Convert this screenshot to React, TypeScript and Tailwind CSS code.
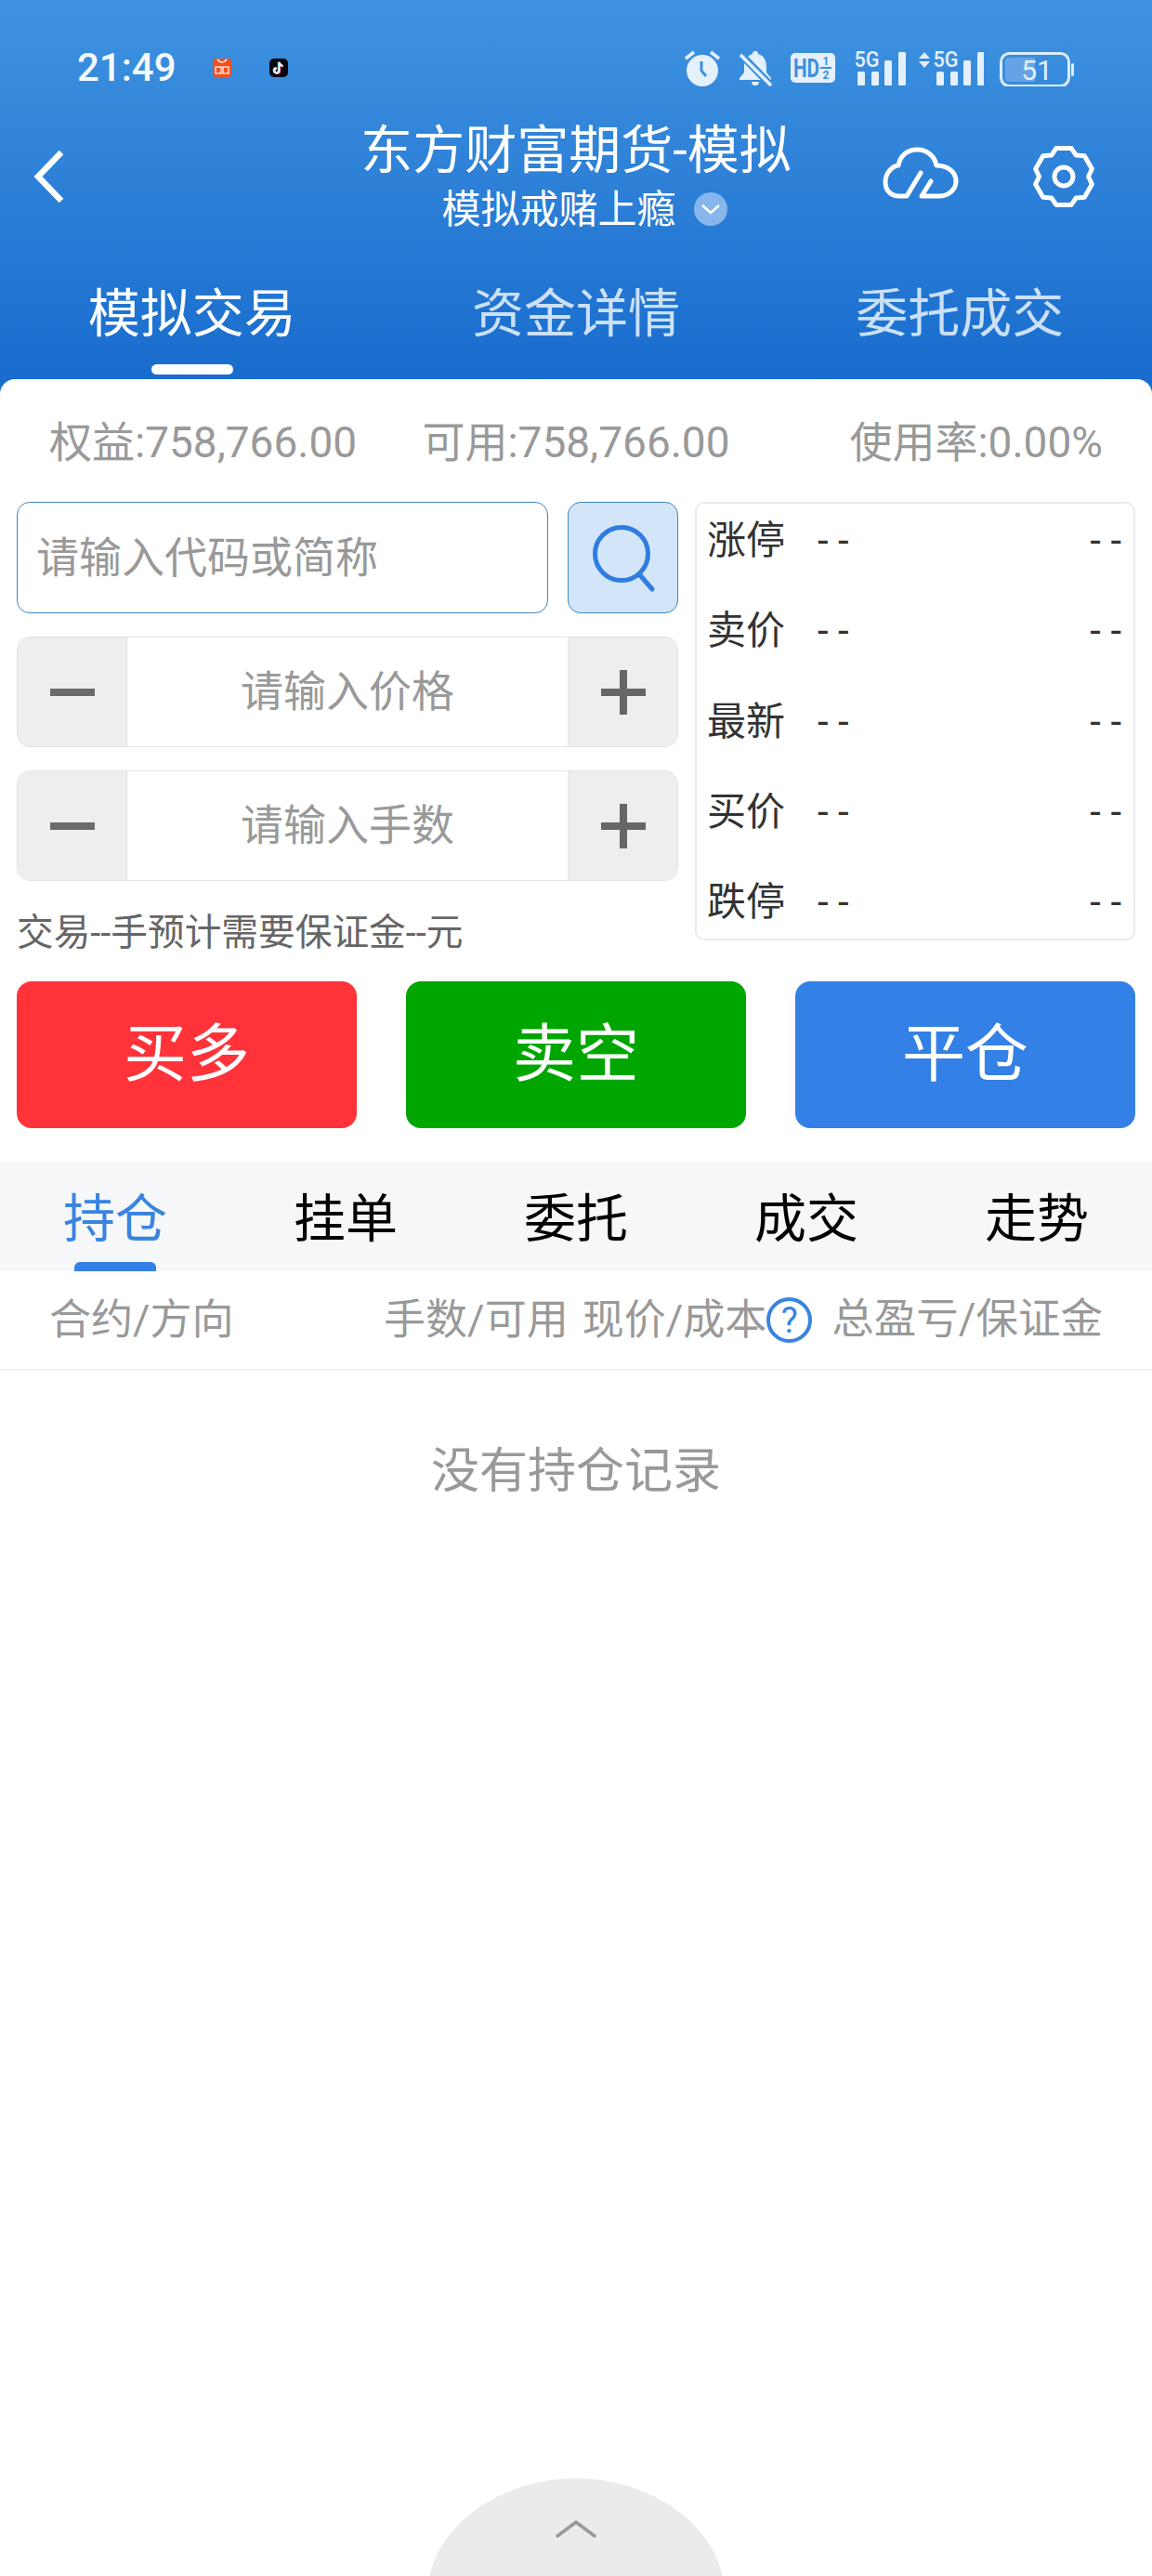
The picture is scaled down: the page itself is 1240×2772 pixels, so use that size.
const topTabs = ["模拟交易", "资金详情", "委托成交"]
const orderTabs = ["持仓", "挂单", "委托", "成交", "走势"]
const quotes = ["涨停", "卖价", "最新", "买价", "跌停"]

const gearPoints = Array.from({ length: 6 }, (_, i) => {
    const a = (Math.PI / 3) * i - Math.PI / 2
    const d = Math.PI / 180
    return [
        [26.5, a - 30 * d],
        [31.5, a - 15 * d],
        [31.5, a + 15 * d],
        [26.5, a + 30 * d],
    ]
})
    .flat()
    .map(([r, a]) => `${(35 + r * Math.cos(a)).toFixed(1)},${(35 + r * Math.sin(a)).toFixed(1)}`)
    .join(" ")

function Signal({ arrows }: { arrows?: boolean }) {
    const x = arrows ? 16 : 0
    return (
        <svg className="-mt-[6px] block" width={arrows ? 70 : 55} height="46" viewBox={arrows ? "0 -6 70 46" : "0 -6 55 46"} fill="#e4f0fb">
            {arrows && <path d="M6 2 L12 9 H0 Z M6 19 L12 12 H0 Z" transform="translate(0 1)" />}
            <text x={x + 13} y="19" textAnchor="middle" fontSize="23" fontWeight="500" textLength="27" lengthAdjust="spacingAndGlyphs">5G</text>
            <rect x={x + 3} y="24" width="8" height="15" rx="1.5" />
            <rect x={x + 18} y="24" width="8" height="15" rx="1.5" />
            <rect x={x + 32} y="12" width="8" height="27" rx="1.5" />
            <rect x={x + 47} y="3" width="8" height="36" rx="1.5" />
        </svg>
    )
}

function StatusBar() {
    return (
        <div className="flex h-[125px] items-start justify-between pl-[83px] pr-[84px] pt-[53px]">
            <div className="flex h-[40px] items-center">
                <span className="w-[105px] text-[42px] font-medium leading-none text-[#f4f9fe]">21:49</span>
                <svg className="ml-[41px]" width="20" height="20" viewBox="0 0 20 20">
                    <rect width="20" height="20" rx="4" fill="#f2501e" />
                    <path d="M5 1 Q10 7 15 1" stroke="#fff" strokeWidth="1.4" fill="none" />
                    <rect x="3" y="9" width="6" height="7" fill="none" stroke="#fff" strokeWidth="1.2" />
                    <rect x="11" y="9" width="6" height="7" fill="none" stroke="#fff" strokeWidth="1.2" />
                </svg>
                <svg className="ml-[41px]" width="20" height="20" viewBox="0 0 20 20">
                    <rect width="20" height="20" rx="5" fill="#07080f" />
                    <path d="M10.5 4 V13 A2.6 2.6 0 1 1 7.8 10.4 M10.5 4 Q11.5 7.5 14.5 8" fill="none" stroke="#35e0e6" strokeWidth="2" transform="translate(-0.7 -0.4)" />
                    <path d="M10.5 4 V13 A2.6 2.6 0 1 1 7.8 10.4 M10.5 4 Q11.5 7.5 14.5 8" fill="none" stroke="#f5325a" strokeWidth="2" transform="translate(0.7 0.4)" />
                    <path d="M10.5 4 V13 A2.6 2.6 0 1 1 7.8 10.4 M10.5 4 Q11.5 7.5 14.5 8" fill="none" stroke="#fff" strokeWidth="1.8" />
                </svg>
            </div>
            <div className="flex h-[40px] items-center">
                <svg width="38" height="40" viewBox="0 0 38 40" fill="#e4f0fb">
                    <circle cx="19" cy="23" r="17" />
                    <path d="M18 13 V23 L23 29" fill="none" stroke="#3d8fde" strokeWidth="3" />
                    <path d="M1 10 L10 3 M37 10 L28 3" stroke="#e4f0fb" strokeWidth="3.5" />
                </svg>
                <svg className="ml-[19px]" width="38" height="40" viewBox="0 0 38 40" fill="#e4f0fb">
                    <path d="M19 2 a3 3 0 0 1 3 3 C29 7 31 13 31 20 V25 L36 31 V33 H2 V31 L7 25 V16 C7 11 11 7 16 5 a3 3 0 0 1 3 -3 Z M15 35 H23 A4 4 0 0 1 15 35 Z" />
                    <path d="M2 4 L35 38" stroke="#3d8fde" strokeWidth="8" />
                    <path d="M3 6 L36 39" stroke="#e4f0fb" strokeWidth="3.5" />
                </svg>
                <svg className="ml-[19px]" width="48" height="34" viewBox="0 0 48 34">
                    <rect y="1" width="48" height="32" rx="5" fill="#e4f0fb" />
                    <text x="3" y="27" fontSize="27" fontWeight="700" fill="#3d8fde" textLength="28" lengthAdjust="spacingAndGlyphs">HD</text>
                    <text x="38" y="14" textAnchor="middle" fontSize="12" fontWeight="700" fill="#3d8fde">1</text>
                    <rect x="32" y="16" width="12" height="2" fill="#3d8fde" />
                    <text x="38" y="29" textAnchor="middle" fontSize="12" fontWeight="700" fill="#3d8fde">2</text>
                </svg>
                <div className="ml-[21px]">
                    <Signal />
                </div>
                <div className="ml-[14px]">
                    <Signal arrows />
                </div>
                <svg className="ml-[17px]" width="80" height="40" viewBox="0 0 80 40">
                    <rect x="1.5" y="4.5" width="73" height="35" rx="9" fill="none" stroke="#dcecfa" strokeWidth="3" />
                    <path d="M10 9 H38 V35 H10 A4 4 0 0 1 6 31 V13 A4 4 0 0 1 10 9 Z" fill="#66a3e6" />
                    <text x="40" y="33" textAnchor="middle" fontSize="30" fill="#e4f0fb">51</text>
                    <rect x="77" y="15" width="3" height="14" rx="1.5" fill="#dcecfa" />
                </svg>
            </div>
        </div>
    )
}

function Header() {
    return (
        <header className="h-[408px] bg-gradient-to-b from-[#3f93e0] to-[#186ccd] text-white">
            <StatusBar />
            <div className="flex h-[130px] items-center">
                <div className="w-[290px] pl-[36px]">
                    <svg className="block" width="34" height="56" viewBox="0 0 34 56" fill="none" stroke="#fff" strokeWidth="6.5">
                        <path d="M30 2 L5 28 L30 54" />
                    </svg>
                </div>
                <div className="flex-1 self-start pt-[2px] text-center">
                    <div className="text-[56px] leading-[70px]">东方财富期货-模拟</div>
                    <div className="flex h-[56px] items-center justify-center pl-[18px] text-[42px]">
                        <span>模拟戒赌上瘾</span>
                        <span className="ml-[19px] flex h-[36px] w-[36px] items-center justify-center rounded-full bg-[#87b6ec]">
                            <svg width="22" height="12" viewBox="0 0 22 12" fill="none" stroke="#fff" strokeWidth="2.6">
                                <path d="M2 2 L11 10 L20 2" />
                            </svg>
                        </span>
                    </div>
                </div>
                <div className="flex w-[290px] items-center justify-end gap-[78px] pr-[60px]">
                    <svg className="-mt-[8px]" width="82" height="56" viewBox="0 0 82 56" fill="none" stroke="#fff" strokeWidth="5" strokeLinecap="round" strokeLinejoin="round">
                        <path d="M41 28 L26 53 H18 C8 53 3 46 3 38 C3 28 10 21 17 20 C19 9 27 3 37 3 C48 3 56 10 58 20 C70 20 79 27 79 37 C79 46 71 53 61 53 H42 L52 37" />
                    </svg>
                    <svg width="70" height="70" viewBox="0 0 70 70" fill="none" stroke="#fff" strokeWidth="5" strokeLinejoin="round">
                        <polygon points={gearPoints} />
                        <circle cx="35" cy="35" r="10" />
                    </svg>
                </div>
            </div>
            <div className="grid grid-cols-3 pt-[43px]">
                {topTabs.map((tab, i) => (
                    <div key={tab} className="flex flex-col items-center">
                        <span className={`text-[56px] leading-[80px] ${i === 0 ? "text-white" : "text-[#cbe0f6]"}`}>{tab}</span>
                        {i === 0 && <span className="mt-[14px] h-[11px] w-[88px] rounded-full bg-white" />}
                    </div>
                ))}
            </div>
        </header>
    )
}

function Stepper({ placeholder }: { placeholder: string }) {
    return (
        <div className="flex h-[119px] overflow-hidden rounded-[14px] border border-[#e2e2e2] bg-white">
            <div className="flex w-[118px] items-center justify-center border-r border-[#e2e2e2] bg-[#eeeeee]">
                <span className="h-[8px] w-[48px] bg-[#6b6b6b]" />
            </div>
            <div className="flex flex-1 items-center justify-center text-[46px] text-[#999999]">{placeholder}</div>
            <div className="flex w-[118px] items-center justify-center border-l border-[#e2e2e2] bg-[#eeeeee]">
                <svg width="48" height="48" viewBox="0 0 48 48" fill="#666666">
                    <rect y="20" width="48" height="8" />
                    <rect x="20" width="8" height="48" />
                </svg>
            </div>
        </div>
    )
}

function TradeForm() {
    return (
        <div className="mt-[40px] flex items-start gap-[18px] px-[18px]">
            <div className="flex w-[712px] flex-col">
                <div className="flex h-[120px] gap-[21px]">
                    <div className="flex flex-1 items-center rounded-[14px] border-[1.5px] border-[#3d85bd] pl-[20px] text-[46px] text-[#999999]">
                        请输入代码或简称
                    </div>
                    <div className="flex w-[119px] items-center justify-center rounded-[14px] border-[1.5px] border-[#3d85bd] bg-[#d3e5f9]">
                        <svg width="70" height="74" viewBox="0 0 70 74" fill="none" stroke="#2f7ddf" strokeWidth="5" strokeLinecap="round">
                            <circle cx="33" cy="33" r="28.5" />
                            <path d="M53 56 L66 71" />
                        </svg>
                    </div>
                </div>
                <div className="mt-[25px] flex flex-col gap-[25px]">
                    <Stepper placeholder="请输入价格" />
                    <Stepper placeholder="请输入手数" />
                </div>
                <div className="mt-[31px] text-[39.7px] leading-[50px] text-[#666666]">交易--手预计需要保证金--元</div>
            </div>
            <div className="flex h-[472px] flex-1 flex-col justify-between rounded-[10px] border-2 border-[#ebebeb] pb-[14px] pl-[11px] pr-[13px] pt-[15px] text-[42px] text-[#333333]">
                {quotes.map((q) => (
                    <div key={q} className="flex h-[50px] items-center leading-[50px]">
                        <span className="w-[119px]">{q}</span>
                        <span className="text-[42px]">- -</span>
                        <span className="ml-auto text-[42px]">- -</span>
                    </div>
                ))}
            </div>
        </div>
    )
}

export default function App() {
    return (
        <div className="relative flex h-[2772px] flex-col overflow-hidden bg-[#186ccd] font-['Roboto','Noto_Sans_CJK_SC',sans-serif]">
            <Header />
            <main className="flex-1 rounded-t-[16px] bg-white">
                <div className="grid grid-cols-3 px-[53px] pt-[44px] text-[46px] leading-[48px] text-[#999999]">
                    <span>权益:758,766.00</span>
                    <span className="text-center">可用:758,766.00</span>
                    <span className="text-right">使用率:0.00%</span>
                </div>

                <TradeForm />

                <div className="mt-[27px] grid h-[158px] grid-cols-3 gap-[53px] px-[18px] text-[68px] text-white">
                    <button className="rounded-[16px] bg-[#ff3339]">买多</button>
                    <button className="rounded-[16px] bg-[#00a600]">卖空</button>
                    <button className="rounded-[16px] bg-[#3380e6]">平仓</button>
                </div>

                <div className="mt-[36px] grid h-[118px] grid-cols-5 bg-[#f5f7f9]">
                    {orderTabs.map((tab, i) => (
                        <div key={tab} className="flex flex-col items-center justify-end">
                            <span className={`mb-[11px] text-[56px] leading-[70px] ${i === 0 ? "text-[#3a84df]" : "text-black"}`}>{tab}</span>
                            <span className={`h-[10px] w-[88px] rounded-t-[6px] ${i === 0 ? "bg-[#3380e6]" : ""}`} />
                        </div>
                    ))}
                </div>

                <div className="flex h-[107px] items-center border-b-2 border-[#eeeeee] px-[53px] text-[45px] text-[#999999]">
                    <span>合约/方向</span>
                    <div className="ml-auto flex items-center">
                        <span>手数/可用</span>
                        <span className="ml-[15px]">现价/成本</span>
                        <span className="flex h-[49px] w-[49px] items-center justify-center rounded-full border-[4px] border-[#3a84df] text-[38px] leading-none text-[#3a84df]">?</span>
                        <span className="ml-[21px] text-[45.5px]">总盈亏/保证金</span>
                    </div>
                </div>

                <div className="pt-[79px] text-center text-[52px] leading-[60px] text-[#999999]">没有持仓记录</div>
            </main>

            <div className="absolute left-1/2 top-[2667px] flex h-[260px] w-[322px] -translate-x-1/2 justify-center rounded-[50%] bg-[#ebebeb] pt-[44px]">
                <svg className="block" width="44" height="20" viewBox="0 0 44 20" fill="none" stroke="#999999" strokeWidth="3.5" strokeLinecap="round" strokeLinejoin="round">
                    <path d="M2 18 L22 3 L42 18" />
                </svg>
            </div>
        </div>
    )
}
